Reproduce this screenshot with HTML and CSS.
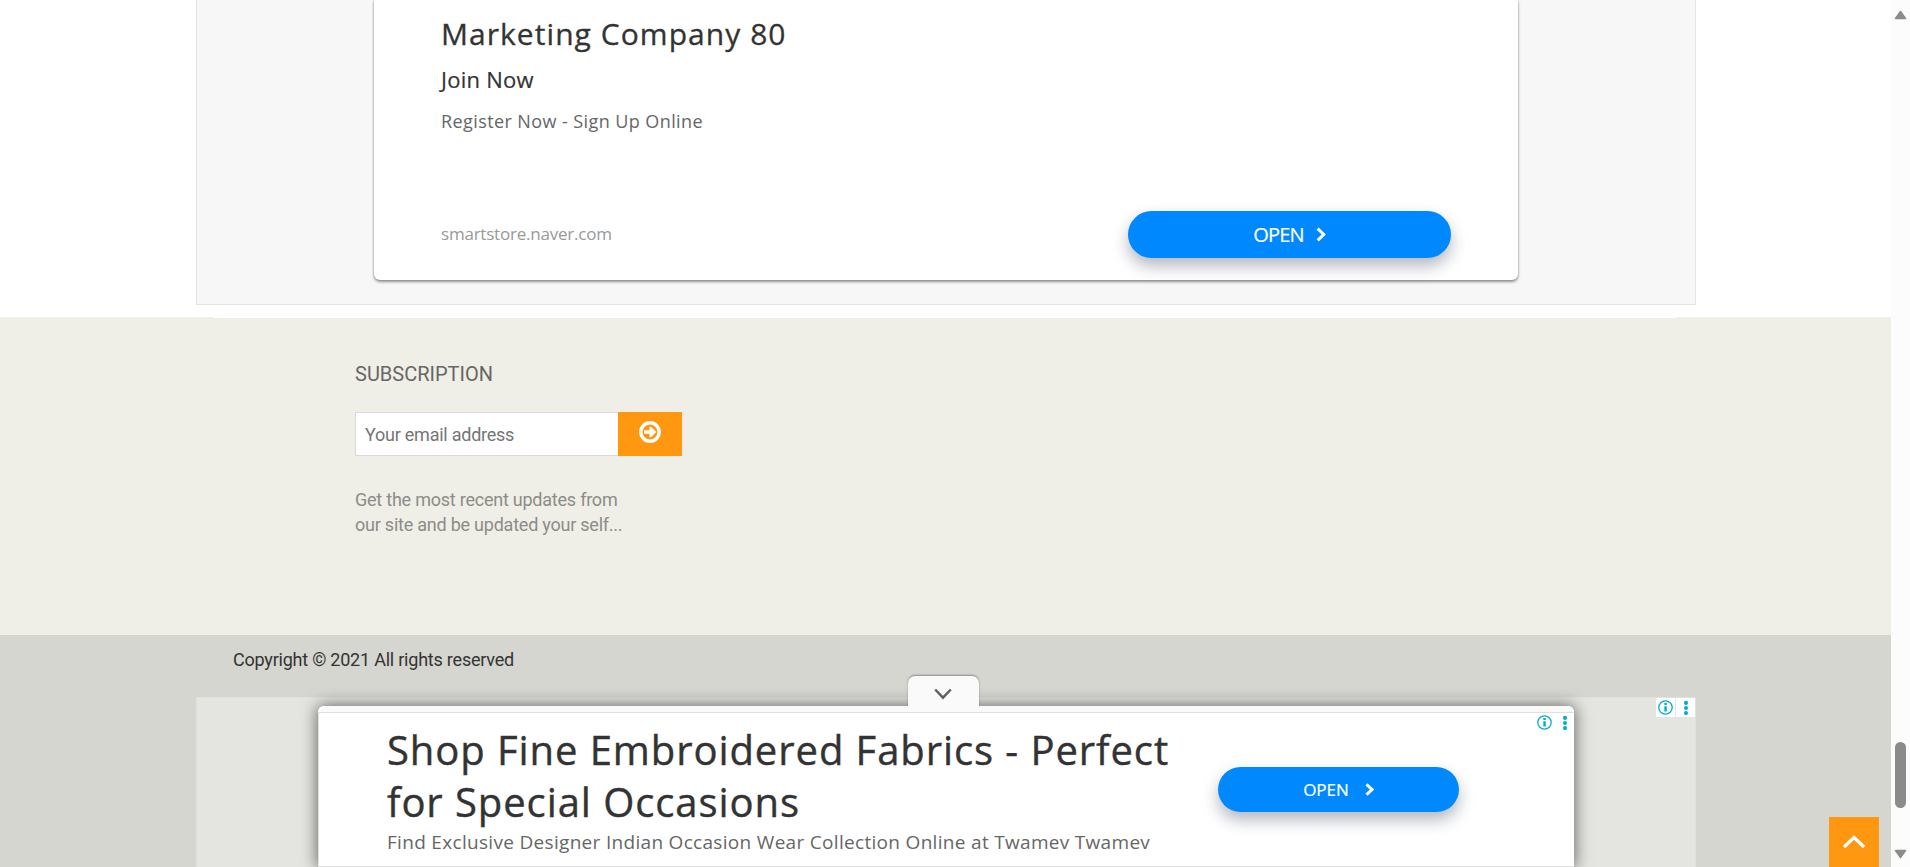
FILE: index.html
```html
<!DOCTYPE html>
<html lang="en">
<head>
<meta charset="utf-8">
<title>Subscription</title>
<link rel="stylesheet" href="styles.css">
</head>
<body>
<div class="window">
  <main class="page">
    <section class="content">
      <div class="ad-frame">
        <article class="card">
          <h2 class="card-title">Marketing Company 80</h2>
          <h3 class="card-lead">Join Now</h3>
          <p class="card-text">Register Now - Sign Up Online</p>
          <div class="card-foot">
            <span class="card-url">smartstore.naver.com</span>
            <a class="open open-large"><span>OPEN</span><svg width="10" height="15" viewBox="0 0 10 15"><path d="M1.7 1.7 7.7 7.5 1.7 13.3" /></svg></a>
          </div>
        </article>
      </div>
      <div class="strip"></div>
    </section>
    <footer class="footer">
      <h4 class="footer-title">SUBSCRIPTION</h4>
      <form class="subscribe">
        <input class="email" type="text" placeholder="Your email address">
        <button class="send" type="button"><svg width="22" height="22" viewBox="0 0 22 22"><circle cx="11" cy="11" r="9.2" fill="none" stroke="#fff" stroke-width="3.4"/><path d="M5.2 9.2h5.2V5.8h1.7l5.2 5.2-5.2 5.2h-1.7v-3.4H5.2z" fill="#fff"/></svg></button>
      </form>
      <p class="footer-text">Get the most recent updates from<br>our site and be updated your self...</p>
    </footer>
    <section class="legal">
      <p class="copyright">Copyright © 2021 All rights reserved</p>
      <div class="slot">
        <div class="choices choices-boxed">
          <span><svg width="17" height="17" viewBox="0 0 16 16"><use href="#info"/></svg></span>
          <span><svg width="6" height="16" viewBox="0 0 6 16"><use href="#dots"/></svg></span>
        </div>
      </div>
    </section>

    <aside class="anchor">
      <div class="tab"><svg width="18" height="12" viewBox="0 0 18 12"><path d="M1.2 1.5 9 9.6l7.800-8.100" fill="none" stroke="#616161" stroke-width="2.500"/></svg></div>
      <div class="anchor-bar"></div>
      <div class="anchor-body">
        <div class="anchor-copy">
          <h2 class="anchor-title">Shop Fine Embroidered Fabrics - Perfect<br>for Special Occasions</h2>
          <p class="anchor-text">Find Exclusive Designer Indian Occasion Wear Collection Online at Twamev Twamev</p>
        </div>
        <a class="open open-small"><span>OPEN</span><svg width="9" height="13" viewBox="0 0 9 13"><path d="M1.500 1.300 7 6.500 1.500 11.700"/></svg></a>
        <div class="choices choices-plain">
          <span><svg width="17" height="17" viewBox="0 0 16 16"><use href="#info"/></svg></span>
          <span><svg width="6" height="16" viewBox="0 0 6 16"><use href="#dots"/></svg></span>
        </div>
      </div>
    </aside>
    <a class="to-top"><svg width="24" height="14" viewBox="0 0 24 14"><path d="M2 12 12 2.500 22 12" fill="none" stroke="#fff" stroke-width="3.200"/></svg></a>
  </main>
  <div class="scrollbar">
    <svg class="arrow" width="13" height="10" viewBox="0 0 13 10"><path d="M6.500 1.500 11.500 8.500H1.500z"/></svg>
    <div class="thumb"></div>
    <svg class="arrow" width="13" height="10" viewBox="0 0 13 10"><path d="M6.500 8.500 11.500 1.500H1.500z"/></svg>
  </div>
</div>
<svg class="defs" width="0" height="0">
  <symbol id="info" viewBox="0 0 16 16"><circle cx="8" cy="8" r="6.300" fill="none" stroke="#00aecd" stroke-width="1.200"/><path d="M6.900 6.800h2.300v5H6.900zM6.900 3.800h2.300v1.900H6.900z" fill="#00aecd"/></symbol>
  <symbol id="dots" viewBox="0 0 6 16"><circle cx="3" cy="2.900" r="2.050" fill="#00aecd"/><circle cx="3" cy="8" r="2.050" fill="#00aecd"/><circle cx="3" cy="13.100" r="2.050" fill="#00aecd"/></symbol>
</svg>
</body>
</html>
```

FILE: styles.css
```css
* { box-sizing: border-box; }
body { margin: 0; overflow: hidden; background: #fff; font-family: Roboto, "Liberation Sans", sans-serif; }
h2, h3, h4, p { margin: 0; font-weight: 400; }
svg { display: block; }
.defs { position: absolute; }
.window { display: flex; width: 1910px; height: 867px; }
.page { position: relative; width: 1891px; height: 867px; overflow: hidden; display: flex; flex-direction: column; }

.content { height: 317px; flex: none; }
.ad-frame { width: 1500px; height: 305px; margin-left: 196px; padding: 0 177px; background: #f7f7f7; border: 1px solid #e4e4e4; border-top: 0; }
.card { height: 280px; width: 1144px; padding: 7px 67px 0; background: #fff; border-radius: 0 0 6px 6px; box-shadow: 0 2px 3px rgba(0,0,0,.4), 0 0 2px rgba(0,0,0,.2); font-family: "Open Sans", sans-serif; white-space: nowrap; }
.card-title { font-size: 30px; line-height: 54px; letter-spacing: 1.05px; color: #333; -webkit-text-stroke: .3px #333; }
.card-lead { font-size: 22px; line-height: 36px; margin-bottom: 2px; letter-spacing: .25px; color: #333; -webkit-text-stroke: .2px #333; }
.card-text { font-size: 18px; line-height: 44px; letter-spacing: .41px; color: #666; }
.card-foot { display: flex; justify-content: space-between; align-items: center; margin-top: 68px; height: 47px; }
.card-url { font-size: 17px; letter-spacing: -.22px; padding-bottom: 2px; color: #999; }

.open { display: flex; align-items: center; justify-content: center; background: #08f; color: #fff; font-family: "Open Sans", sans-serif; box-shadow: 0 8px 16px rgba(20,30,60,.32); }
.open span { padding-bottom: 1px; -webkit-text-stroke: .2px #fff; }
.open path { fill: none; stroke: #fff; stroke-width: 3; }
.open-large { width: 323px; height: 47px; border-radius: 24px; gap: 12px; font-size: 20px; letter-spacing: -.8px; }
.open-small { width: 241px; height: 45px; border-radius: 23px; gap: 16px; font-size: 17px; letter-spacing: 0; margin-top: 54px; }

.strip { width: 1463px; height: 13px; margin-left: 214px; background: #fff; position: relative; z-index: 1; }
.footer { flex: none; height: 318px; padding: 45px 0 0 355px; background: #f0efe7; }
.footer-title { font-size: 20px; line-height: 25px; letter-spacing: 0; color: #666; }
.subscribe { display: flex; margin-top: 25px; width: 327px; height: 44px; }
.email { width: 263px; height: 44px; padding: 0 9px; border: 1px solid #d9d9d9; border-right: 0; border-radius: 0; background: #fff; font: 18px Roboto, sans-serif; letter-spacing: -.24px; outline: 0; }
.email::placeholder { color: #757575; opacity: 1; }
.send { width: 64px; height: 44px; padding: 0 0 4px; border: 0; background: #ff9710; display: flex; justify-content: center; align-items: center; }
.footer-text { margin-top: 31px; font-size: 18px; line-height: 25px; letter-spacing: -.23px; color: #8c8c88; }

.legal { flex: none; height: 232px; background: #d5d6cf; }
.copyright { height: 62px; padding: 12px 0 0 233px; font-size: 18px; line-height: 26px; letter-spacing: -.22px; color: #333; }
.slot { width: 1500px; height: 170px; margin-left: 196px; border: 1px solid #dfe0e0; border-bottom: 0; background: #e4e5e0; display: flex; justify-content: flex-end; }
.choices { display: flex; }
.choices span { width: 19px; height: 19px; display: flex; justify-content: center; align-items: center; }
.choices-boxed { gap: 1px; }
.choices-boxed span { background: #fff; }
.choices-plain { position: absolute; top: 0; right: 0; gap: 1px; }

.anchor { position: absolute; left: 318px; top: 706px; width: 1256px; height: 161px; border-radius: 6px 6px 0 0; background: #fff; box-shadow: 0 0 16px 1px rgba(0,0,0,.55); }
.tab { position: absolute; left: 590px; top: -30px; width: 71px; height: 31px; padding: 12px 0 0 26px; border-radius: 7px 7px 0 0; background: #fafafa; box-shadow: 0 -1px 2px rgba(0,0,0,.35); clip-path: inset(-4px -4px 0 -4px); }
.anchor-bar { position: relative; height: 7px; background: #fafafa; border-bottom: 1px solid #e0e0e0; border-radius: 6px 6px 0 0; }
.anchor-body { position: relative; height: 154px; display: flex; justify-content: space-between; padding: 0 115px 0 68px; border-bottom: 1px solid #e0e0e0; border-left: 1px solid #e0e0e0; }
.anchor-copy { font-family: "Open Sans", sans-serif; white-space: nowrap; padding-top: 11px; }
.anchor-title { font-size: 40px; line-height: 52px; letter-spacing: .92px; color: #333; -webkit-text-stroke: .4px #333; }
.anchor-text { font-size: 19px; line-height: 28px; letter-spacing: .31px; color: #666; }
.to-top { position: absolute; left: 1829px; top: 817px; width: 50px; height: 50px; padding: 18px 0 0 13px; background: #ff9710; }

.scrollbar { width: 19px; height: 867px; background: #fcfcfc; display: flex; flex-direction: column; align-items: center; justify-content: space-between; padding: 10px 0 8px; }
.thumb { width: 11px; height: 66px; border-radius: 6px; background: #8b8b8b; margin-top: 681px; }
.arrow path { fill: #8b8b8b; stroke: #8b8b8b; stroke-width: 1.500; stroke-linejoin: round; }
```
